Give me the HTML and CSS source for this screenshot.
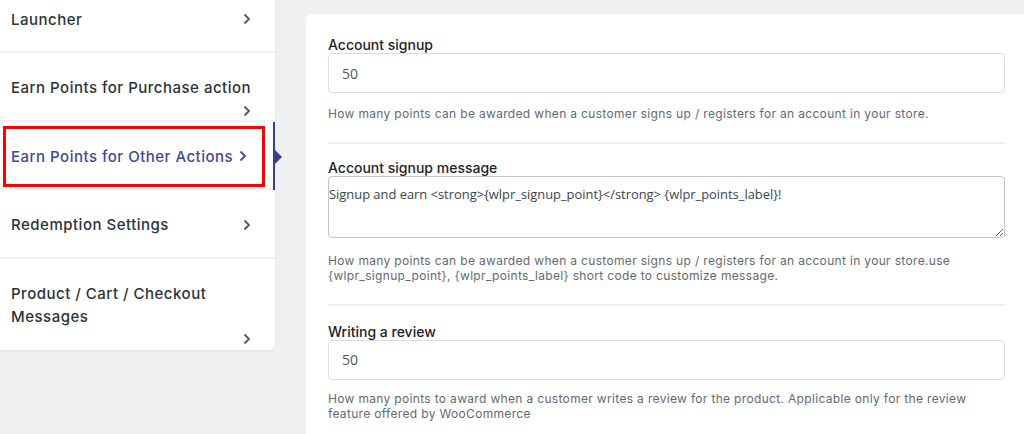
FILE: index.html
```html
<!DOCTYPE html>
<html>
<head>
<meta charset="utf-8">
<link rel="stylesheet" href="styles.css">
</head>
<body>
<div class="page">
  <nav class="sidebar">
    <div class="nav-item">
      <span class="nav-text">Launcher</span>
      <svg class="chev" viewBox="0 0 8 12"><path d="M1.5 1.5 6 6 1.5 10.5"/></svg>
    </div>
    <div class="nav-item nav-item--wrap">
      <span class="nav-text nav-text--nowrap">Earn Points for Purchase action</span>
      <svg class="chev" viewBox="0 0 8 12"><path d="M1.5 1.5 6 6 1.5 10.5"/></svg>
    </div>
    <div class="nav-item nav-item--active">
      <span class="nav-text">Earn Points for Other Actions</span>
      <svg class="chev" viewBox="0 0 8 12"><path d="M1.5 1.5 6 6 1.5 10.5"/></svg>
    </div>
    <div class="nav-item">
      <span class="nav-text">Redemption Settings</span>
      <svg class="chev" viewBox="0 0 8 12"><path d="M1.5 1.5 6 6 1.5 10.5"/></svg>
    </div>
    <div class="nav-item nav-item--wrap nav-item--last">
      <span class="nav-text">Product / Cart / Checkout Messages</span>
      <svg class="chev" viewBox="0 0 8 12"><path d="M1.5 1.5 6 6 1.5 10.5"/></svg>
    </div>
  </nav>
  <main class="panel">
    <section class="field field--first">
      <label class="field-label">Account signup</label>
      <input class="field-input" type="text" value="50">
      <p class="field-help">How many points can be awarded when a customer signs up / registers for an account in your store.</p>
    </section>
    <section class="field field--second">
      <label class="field-label">Account signup message</label>
      <textarea class="field-textarea">Signup and earn &lt;strong&gt;{wlpr_signup_point}&lt;/strong&gt; {wlpr_points_label}!</textarea>
      <p class="field-help">How many points can be awarded when a customer signs up / registers for an account in your store.use {wlpr_signup_point}, {wlpr_points_label} short code to customize message.</p>
    </section>
    <section class="field field--last">
      <label class="field-label">Writing a review</label>
      <input class="field-input" type="text" value="50">
      <p class="field-help">How many points to award when a customer writes a review for the product. Applicable only for the review feature offered by WooCommerce</p>
    </section>
  </main>
</div>
</body>
</html>
```

FILE: styles.css
```css
* { box-sizing: border-box; }
html, body {
  margin: 0;
  padding: 0;
  background: #eff0f2;
  overflow: hidden;
  height: 434px;
}
body {
  font-family: Inter, "Open Sans", sans-serif;
  color: #2c3338;
}
.page {
  display: flex;
  align-items: flex-start;
  gap: 31px;
  width: 1027px;
}
.sidebar {
  width: 275px;
  flex: none;
  background: #fff;
  border-radius: 0 0 5px 0;
  box-shadow: 0 1px 2px rgba(0,0,0,0.06);
  margin-top: -15.5px;
}
.nav-item {
  position: relative;
  display: flex;
  flex-wrap: wrap;
  align-items: flex-start;
  padding: 23px 24px 20.5px 11px;
  border-bottom: 2px solid #f2f2f3;
  font-size: 15px;
  font-weight: 500;
  line-height: 23px;
  letter-spacing: 0.5px;
  color: #2c3338;
}
.nav-item--wrap { padding-bottom: 3px; }
.nav-item--last { border-bottom: 0; padding-bottom: 5px; }
.nav-text { flex: 0 1 auto; }
.nav-text--nowrap { white-space: nowrap; flex-shrink: 0; }
.chev {
  width: 8px;
  height: 12px;
  margin: 5.5px 0 0 auto;
  flex: none;
  fill: none;
  stroke: #50575e;
  stroke-width: 1.8;
}
.nav-item--active { color: #43479b; }
.nav-item--active .chev { stroke: #43479b; margin-left: 6px; }
.nav-item--active::before {
  content: "";
  position: absolute;
  left: 3px;
  top: 4px;
  right: 10px;
  bottom: 1px;
  border: 3px solid #ff0000;
}
.nav-item--active::after {
  content: "";
  position: absolute;
  right: 0;
  top: 0;
  bottom: -2px;
  width: 2px;
  background: #3b3f98;
}
.nav-item--active .nav-text::after {
  content: "";
  position: absolute;
  left: 275px;
  top: 28px;
  border-left: 7px solid #3b3f98;
  border-top: 7px solid transparent;
  border-bottom: 7px solid transparent;
}
.panel {
  flex: 1;
  margin-top: 14px;
  background: #fff;
  border-radius: 6px 0 0 0;
  padding: 22px 22px 0 22px;
  height: 440px;
}
.field {
  border-bottom: 2px solid #f0f0f1;
  padding: 15px 0 20px;
}
.field--first { padding-top: 0; }
.field--last { border-bottom: 0; padding-top: 17px; }
.field-label {
  display: block;
  font-size: 14px;
  font-weight: 500;
  line-height: 17px;
  color: #1d2327;
}
.field-input {
  display: block;
  width: 100%;
  height: 40px;
  margin: 0;
  border: 1px solid #dcdcde;
  border-radius: 4px;
  padding: 0 13px;
  font-family: "Open Sans", sans-serif;
  font-size: 14px;
  color: #50575e;
  background: #fff;
}
.field-textarea {
  display: block;
  width: 100%;
  height: 62px;
  margin: 0;
  border: 1px solid #c3c4c7;
  border-radius: 4px;
  padding: 7px 0 3px;
  font-family: "Open Sans", sans-serif;
  font-size: 12.9px;
  line-height: 20px;
  color: #3c434a;
  background: #fff;
  resize: vertical;
}
.field-help {
  margin: 13px 0 0;
  font-size: 12px;
  line-height: 15.5px;
  letter-spacing: 0.33px;
  color: #646970;
}
.field--second .field-help { margin-top: 15px; }
.field--last .field-help { margin-top: 11px; }
```
